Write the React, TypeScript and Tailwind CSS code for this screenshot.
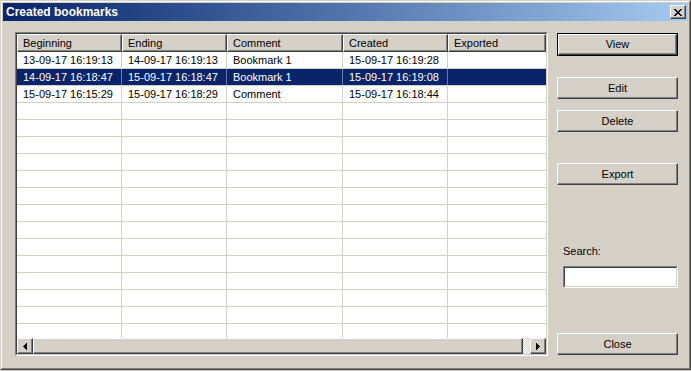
import React from "react";

const cols = [105, 105, 116, 105];

const rows: string[][] = [
  ["13-09-17 16:19:13", "14-09-17 16:19:13", "Bookmark 1", "15-09-17 16:19:28", ""],
  ["14-09-17 16:18:47", "15-09-17 16:18:47", "Bookmark 1", "15-09-17 16:19:08", ""],
  ["15-09-17 16:15:29", "15-09-17 16:18:29", "Comment", "15-09-17 16:18:44", ""],
];

const headers = ["Beginning", "Ending", "Comment", "Created", "Exported"];

function CloseGlyph() {
  const px = [
    "XX....XX",
    ".XX..XX.",
    "..XXXX..",
    "...XX...",
    "..XXXX..",
    ".XX..XX.",
    "XX....XX",
  ];
  return (
    <svg width="8" height="7" viewBox="0 0 8 7" shapeRendering="crispEdges">
      {px.flatMap((r, y) =>
        r.split("").map((c, x) => (c === "X" ? <rect key={`${x}-${y}`} x={x} y={y} width="1" height="1" fill="#000" /> : null))
      )}
    </svg>
  );
}

function Arrow({ dir }: { dir: "left" | "right" }) {
  const rects = [0, 1, 2, 3].map((i) => {
    const x = dir === "left" ? i : 3 - i;
    return <rect key={i} x={x} y={3 - i} width="1" height={1 + 2 * i} fill="#000" />;
  });
  return (
    <svg width="4" height="7" viewBox="0 0 4 7" shapeRendering="crispEdges">
      {rects}
    </svg>
  );
}

function Btn({ label, def }: { label: string; def?: boolean }) {
  if (def) {
    return (
      <div className="w-[121px] h-[23px] border border-black">
        <div className="w-full h-full flex items-center justify-center border border-t-white border-l-white border-r-[#404040] border-b-[#404040] shadow-[inset_-1px_-1px_0_#808080]">
          {label}
        </div>
      </div>
    );
  }
  return (
    <div className="w-[121px] h-[22px] flex items-center justify-center border border-t-white border-l-white border-r-[#404040] border-b-[#404040] shadow-[inset_-1px_-1px_0_#808080]">
      {label}
    </div>
  );
}

export default function App() {
  const allRows: string[][] = [...rows];
  while (allRows.length < 18) allRows.push(["", "", "", "", ""]);

  return (
    <div className="w-[691px] h-[371px] bg-[#d4d0c8] font-['Liberation_Sans',Arial,sans-serif] text-[11px] leading-none text-black overflow-hidden">
      <div className="w-[691px] h-[370px] border border-t-[#d4d0c8] border-l-[#d4d0c8] border-r-[#404040] border-b-[#404040]">
        <div className="h-full border border-t-white border-l-white border-r-[#808080] border-b-[#808080] p-px flex flex-col">
          {/* Title bar */}
          <div className="h-[18px] shrink-0 flex items-center bg-gradient-to-r from-[#0a246a] to-[#a6caf0] pl-[3px] pr-[2px]">
            <span className="text-white font-bold text-[12px] flex-1">Created bookmarks</span>
            <div className="w-[16px] h-[14px] bg-[#d4d0c8] flex items-center justify-center border border-t-white border-l-white border-r-[#404040] border-b-[#404040] shadow-[inset_-1px_-1px_0_#808080]">
              <CloseGlyph />
            </div>
          </div>

          {/* Body */}
          <div className="flex-1 flex items-start pl-[12px] pt-[11px]">
            {/* List view */}
            <div className="w-[533px] h-[324px] border border-t-[#808080] border-l-[#808080] border-r-white border-b-white">
              <div className="w-full h-full border border-t-[#404040] border-l-[#404040] border-r-[#d4d0c8] border-b-[#d4d0c8] bg-white flex flex-col">
                {/* header */}
                <div className="h-[18px] shrink-0 flex bg-[#d4d0c8]">
                  {headers.map((h, i) => (
                    <div
                      key={h}
                      className={`h-full flex items-center pl-[5px] border border-t-white border-l-white border-r-[#404040] border-b-[#404040] shadow-[inset_-1px_-1px_0_#808080] ${i === 4 ? "flex-1" : ""}`}
                      style={i < 4 ? { width: cols[i] } : undefined}
                    >
                      {h}
                    </div>
                  ))}
                </div>
                {/* rows */}
                <div className="h-[286px] shrink-0 overflow-hidden">
                  {allRows.map((r, ri) => {
                    const sel = ri === 1;
                    return (
                      <div
                        key={ri}
                        className={`h-[17px] flex border-b border-[#d4d0c8] ${sel ? "bg-[#0a246a] text-white" : ""}`}
                      >
                        {r.map((c, ci) => (
                          <div
                            key={ci}
                            className={`h-full flex items-center pl-[6px] whitespace-nowrap ${ci < 4 ? "border-r" : "flex-1"} ${sel ? "border-[#6a7aa6]" : "border-[#d4d0c8]"}`}
                            style={ci < 4 ? { width: cols[ci] } : undefined}
                          >
                            {c}
                          </div>
                        ))}
                      </div>
                    );
                  })}
                </div>
                {/* scrollbar */}
                <div className="h-[16px] shrink-0 flex">
                  <div className="w-[16px] h-full bg-[#d4d0c8] flex items-center justify-center border border-t-white border-l-white border-r-[#404040] border-b-[#404040] shadow-[inset_-1px_-1px_0_#808080]">
                    <Arrow dir="left" />
                  </div>
                  <div className="w-[490px] h-full bg-[#d4d0c8] border border-t-white border-l-white border-r-[#404040] border-b-[#404040] shadow-[inset_-1px_-1px_0_#808080]" />
                  <div className="flex-1 h-full bg-[repeating-conic-gradient(#ffffff_0%_25%,#d4d0c8_0%_50%)] bg-[length:2px_2px]" />
                  <div className="w-[16px] h-full bg-[#d4d0c8] flex items-center justify-center border border-t-white border-l-white border-r-[#404040] border-b-[#404040] shadow-[inset_-1px_-1px_0_#808080]">
                    <Arrow dir="right" />
                  </div>
                </div>
              </div>
            </div>

            {/* Buttons column */}
            <div className="ml-[9px] mt-px flex flex-col">
              <Btn label="View" def />
              <div className="mt-[21px]">
                <Btn label="Edit" />
              </div>
              <div className="mt-[11px]">
                <Btn label="Delete" />
              </div>
              <div className="mt-[31px]">
                <Btn label="Export" />
              </div>
              <div className="mt-[60px] ml-[6px] h-[12px] flex items-center">Search:</div>
              <div className="mt-[9px] ml-[6px] w-[115px] h-[22px] border border-t-[#808080] border-l-[#808080] border-r-white border-b-white">
                <div className="w-full h-full bg-white border border-t-[#404040] border-l-[#404040] border-r-[#d4d0c8] border-b-[#d4d0c8]" />
              </div>
              <div className="mt-[45px]">
                <Btn label="Close" />
              </div>
            </div>
          </div>
        </div>
      </div>
    </div>
  );
}
